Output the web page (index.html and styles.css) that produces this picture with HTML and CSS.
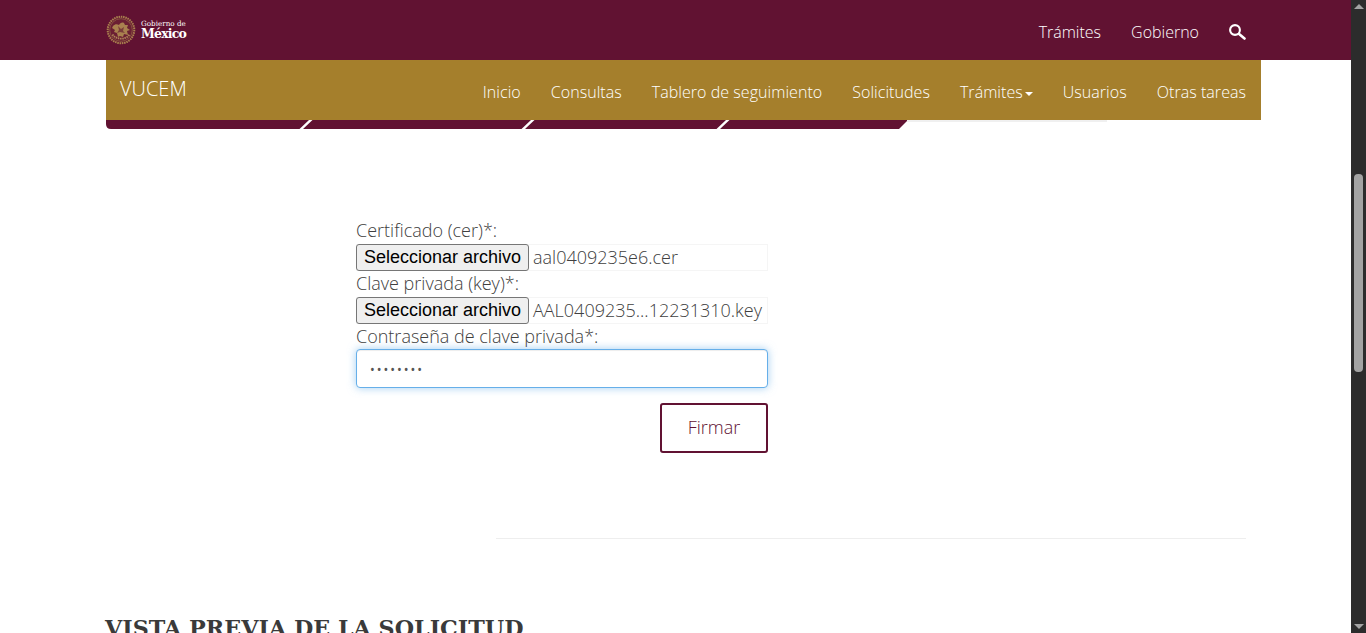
FILE: index.html
```html
<!DOCTYPE html>
<html lang="es">
<head>
<meta charset="utf-8">
<title>VUCEM</title>
<link rel="stylesheet" href="styles.css">
</head>
<body>
<div class="page">
  <main class="main">
    <header class="topbar">
      <div class="container topbar-inner">
        <a class="logo" href="#">
          <svg class="emblem" width="30" height="30" viewBox="0 0 30 30" aria-hidden="true">
            <circle cx="15" cy="15" r="13.3" fill="#6b1f33" stroke="#a9814f" stroke-width="2" stroke-dasharray="1.5 .8"/>
            <circle cx="15" cy="15" r="11.300" fill="none" stroke="#8d5c42" stroke-width=".8"/>
            <path d="M7 11c2-2 4-2 6-1 1-2 3-3 5-2l1 2 3 0-1 3 3 2-3 1 1 4-4-1-1 3-3-1-2 1-1-4-3-1 1-2-3-2z" fill="#a9814f"/>
            <path d="M12 11l3 3 3-2-1 4 2 2-5-1-3 1 2-3z" fill="#7b3d3a"/>
            <path d="M6.500 19.500c3.500 5.500 13.500 5.500 17 0" fill="none" stroke="#b0885a" stroke-width="1.800" stroke-dasharray="1.500 .7"/>
          </svg>
          <span class="logo-text">
            <span class="logo-small">Gobierno de</span>
            <span class="logo-big">México</span>
          </span>
        </a>
        <nav class="topnav">
          <a href="#">Trámites</a>
          <a href="#">Gobierno</a>
          <a href="#" class="search" aria-label="Buscar">
            <svg width="17" height="16" viewBox="0 0 17 16" aria-hidden="true">
              <circle cx="6" cy="6" r="4.900" fill="none" stroke="#fff" stroke-width="2.100"/>
              <path d="M9.800 9.800l5.700 4.700" fill="none" stroke="#fff" stroke-width="2.600" stroke-linecap="round"/>
            </svg>
          </a>
        </nav>
      </div>
    </header>

    <div class="container sub">
      <div class="subnav">
        <a class="brand" href="#">VUCEM</a>
        <nav class="menu">
          <a href="#">Inicio</a>
          <a href="#">Consultas</a>
          <a href="#">Tablero de seguimiento</a>
          <a href="#">Solicitudes</a>
          <a href="#">Trámites<span class="caret"></span></a>
          <a href="#">Usuarios</a>
          <a href="#">Otras tareas</a>
        </nav>
      </div>
      <div class="wizard">
        <svg class="wizard-steps" width="802" height="9" viewBox="0 0 802 9" aria-hidden="true">
          <path d="M0 0H802L793 9H5Q0 9 0 4Z" fill="#611232"/>
          <path d="M203 0h3.500L197 9h-3.500zM425 0h3.500L419 9h-3.500zM620 0h3.500L614 9h-3.500z" fill="#fff"/>
        </svg>
        <div class="wizard-line"></div>
      </div>
    </div>

    <form class="sign-form">
      <label class="field-label">Certificado (cer)*:</label>
      <div class="file-row">
        <button type="button" class="file-btn">Seleccionar archivo</button>
        <span class="file-name">aal0409235e6.cer</span>
      </div>
      <label class="field-label">Clave privada (key)*:</label>
      <div class="file-row">
        <button type="button" class="file-btn">Seleccionar archivo</button>
        <span class="file-name">AAL0409235...12231310.key</span>
      </div>
      <label class="field-label field-label-tight">Contraseña de clave privada*:</label>
      <input class="password" type="password" value="12345678">
      <div class="actions">
        <button type="button" class="sign-btn">Firmar</button>
      </div>
    </form>

    <div class="container">
      <hr class="rule">
      <h2 class="preview-title">VISTA PREVIA DE LA SOLICITUD</h2>
    </div>
  </main>

  <aside class="scrollbar" aria-hidden="true">
    <span class="arrow arrow-up"></span>
    <div class="track"><div class="thumb"></div></div>
    <span class="arrow arrow-down"></span>
  </aside>
</div>
</body>
</html>
```

FILE: styles.css
```css
* { box-sizing: border-box; }

html, body {
  margin: 0;
  padding: 0;
  height: 633px;
  overflow: hidden;
  background: #fff;
}

body {
  font-family: "Open Sans", sans-serif;
  font-size: 18px;
  font-weight: 300;
  color: #404040;
}

a { text-decoration: none; color: inherit; }

.page {
  display: flex;
  height: 633px;
}

.main {
  flex: 1;
  min-width: 0;
  overflow: hidden;
}

.container {
  width: 1170px;
  margin-left: 91px;
  padding-left: 15px;
}

.topbar {
  height: 60px;
  background: #611232;
  color: #fff;
}

.topbar-inner {
  display: flex;
  align-items: center;
  justify-content: space-between;
  height: 60px;
  padding-right: 15px;
}

.logo {
  display: flex;
  align-items: center;
  gap: 5px;
  margin-top: -1px;
}

.emblem { display: block; }

.logo-text {
  display: flex;
  flex-direction: column;
  font-family: "DejaVu Serif", serif;
  color: #fff;
}

.logo-small {
  font-size: 7.200px;
  line-height: 8px;
  font-weight: 400;
  white-space: nowrap;
}

.logo-big {
  font-size: 12.500px;
  line-height: 12px;
  font-weight: 700;
  letter-spacing: -0.8px;
}

.topnav {
  display: flex;
  align-items: center;
  gap: 30px;
  font-size: 16px;
  line-height: 24px;
  margin-top: 4px;
}

.topnav .search {
  display: flex;
  margin-top: -1px;
}

.sub { padding-right: 0; }

.subnav {
  display: flex;
  align-items: center;
  justify-content: space-between;
  height: 60px;
  background: #a57f2c;
  color: #fff;
  padding: 0 15px 0 14px;
}

.brand {
  font-size: 20px;
  line-height: 24px;
  margin-top: -3px;
}

.menu {
  display: flex;
  gap: 30px;
  font-size: 16px;
  line-height: 24px;
  letter-spacing: .05px;
  margin-top: 4px;
}

.caret {
  display: inline-block;
  width: 0;
  height: 0;
  margin-left: 2px;
  vertical-align: middle;
  border-top: 4px solid #fff;
  border-left: 4px solid transparent;
  border-right: 4px solid transparent;
}

.wizard {
  display: flex;
  align-items: flex-start;
  height: 9px;
}

.wizard-steps { display: block; flex: none; }

.wizard-line {
  width: 200px;
  height: 2px;
  background: #f0f0f0;
  margin-left: -1px;
}

.sign-form {
  width: 412px;
  margin: 89px 0 0 356px;
}

.field-label {
  display: block;
  height: 26px;
  line-height: 24px;
}

.field-label-tight {
  height: 25px;
  line-height: 25px;
}

.file-row {
  display: flex;
  align-items: center;
  height: 27px;
  box-shadow: inset 0 0 0 1px #f5f5f5;
}

.file-btn {
  flex: none;
  width: 173px;
  height: 27px;
  padding: 0;
  font-family: "Liberation Sans", Arial, sans-serif;
  font-size: 18px;
  font-weight: 400;
  color: #000;
  background: #efefef;
  border: 1px solid #767676;
  border-radius: 3px;
}

.file-name {
  margin-left: 4px;
  white-space: nowrap;
  line-height: 24px;
  margin-bottom: 2px;
}

.password {
  display: block;
  width: 100%;
  height: 39px;
  padding: 6px 12px;
  font-family: "Open Sans", sans-serif;
  font-size: 18px;
  font-weight: 300;
  color: #555;
  background: #fff;
  border: 1px solid #66afe9;
  border-radius: 4px;
  outline: none;
  box-shadow: inset 0 1px 1px rgba(0, 0, 0, .075), 0 0 8px rgba(102, 175, 233, .6);
}

.actions {
  display: flex;
  justify-content: flex-end;
  margin-top: 15px;
}

.sign-btn {
  width: 108px;
  height: 50px;
  padding: 0 0 2px;
  font-family: "Open Sans", sans-serif;
  font-size: 18px;
  font-weight: 300;
  color: #611232;
  background: #fff;
  border: 2px solid #611232;
  border-radius: 3px;
}

.rule {
  width: 750px;
  height: 1px;
  margin: 85px 0 0 390px;
  border: 0;
  background: #eee;
}

.preview-title {
  margin: 74px 0 0 -1px;
  font-family: "DejaVu Serif", serif;
  font-size: 22.250px;
  line-height: 30px;
  font-weight: 700;
  color: #3a3a3a;
  white-space: nowrap;
}

.scrollbar {
  flex: none;
  width: 15px;
  height: 633px;
  display: flex;
  flex-direction: column;
  align-items: center;
  background: #2c2c2c;
}

.arrow {
  flex: none;
  width: 0;
  height: 0;
  border-left: 5px solid transparent;
  border-right: 5px solid transparent;
}

.arrow-up {
  margin-top: 4px;
  border-bottom: 5px solid #a3a3a3;
}

.arrow-down {
  margin-bottom: 4px;
  border-top: 5px solid #a3a3a3;
}

.track {
  flex: 1;
  width: 100%;
  padding-top: 165px;
  display: flex;
  justify-content: center;
}

.thumb {
  width: 9px;
  height: 198px;
  border-radius: 4px;
  background: #a3a3a3;
}
```
